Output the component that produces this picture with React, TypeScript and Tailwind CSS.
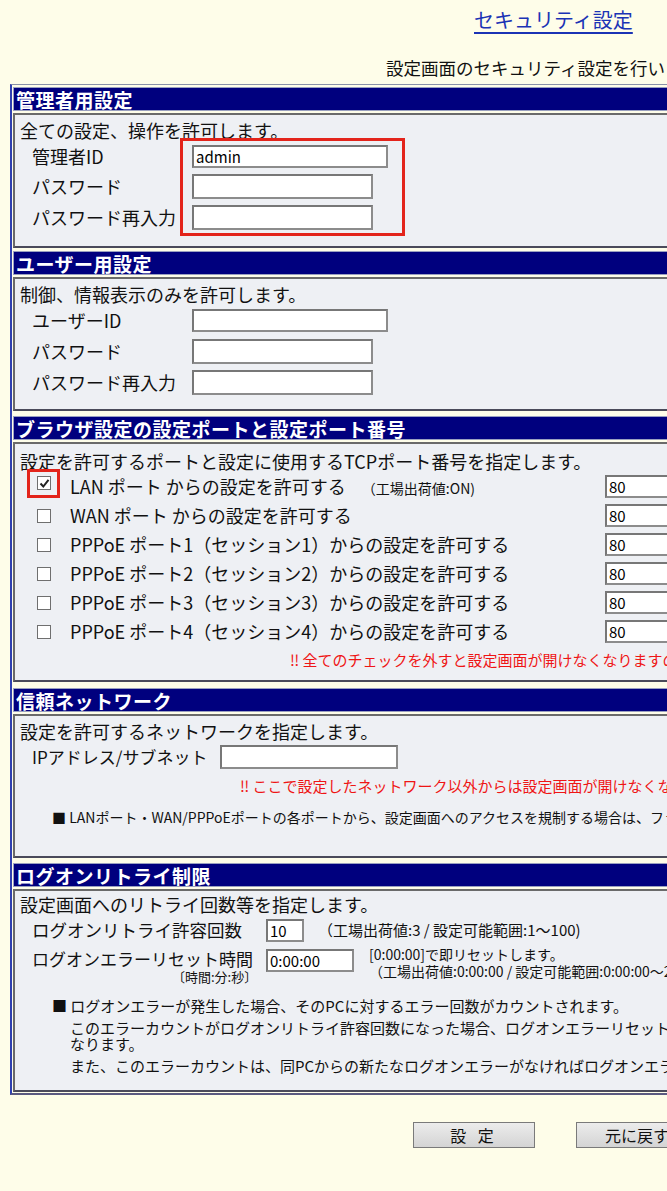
import React from 'react';

const Header = ({ title }: { title: string }) => (
    <div className="h-[24px] bg-[#00007e] border border-[#9aa0c0] flex items-center pl-[2px] text-white font-bold text-[19px] leading-none tracking-[0.5px]">
        {title}
    </div>
);

const Body = ({ className, children }: { className: string; children: React.ReactNode }) => (
    <div className={`mt-[2px] bg-[#eef0f4] border-2 border-[#6a6a6a] border-b-[#4a4a5a] ${className}`}>{children}</div>
);

const TextBox = ({ w, h = 'h-[24px]', value = '' }: { w: string; h?: string; value?: string }) => (
    <input
        readOnly
        value={value}
        className={`${w} ${h} bg-white border-2 border-[#8c8c8c] border-t-[#777] border-l-[#777] px-[2px] text-[15px] text-black outline-none font-['Noto_Sans_CJK_JP',sans-serif]`}
    />
);

const Check = ({ checked = false }: { checked?: boolean }) => (
    <span className="w-[14px] h-[14px] bg-white border border-[#6f6f6f] flex items-center justify-center">
        {checked && (
            <svg width="11" height="11" viewBox="0 0 11 11">
                <path d="M1.5 5.5 L4.3 8.5 L9.5 1.8" fill="none" stroke="#222" strokeWidth="2" />
            </svg>
        )}
    </span>
);

const ports = [
    'WAN ポート からの設定を許可する',
    'PPPoE ポート1（セッション1）からの設定を許可する',
    'PPPoE ポート2（セッション2）からの設定を許可する',
    'PPPoE ポート3（セッション3）からの設定を許可する',
    'PPPoE ポート4（セッション4）からの設定を許可する',
];

export default function App() {
    return (
        <div className="w-[667px] h-[1191px] overflow-hidden bg-[#fefde9] text-[#111] font-['Noto_Sans_CJK_JP',sans-serif]">
            <div className="w-[1100px]">
                {/* Title */}
                <div className="pt-[6px] pl-[474px] text-[20px] leading-[28px] text-[#1b33b5] underline underline-offset-[4px] decoration-[1.5px]">
                    セキュリティ設定
                </div>
                <div className="mt-[23px] pl-[386px] text-[17.5px] leading-[22px] whitespace-nowrap">
                    設定画面のセキュリティ設定を行います。
                </div>

                {/* Outer table */}
                <div className="mt-[5px] ml-[10px] border-l-2 border-l-[#3040b0] border-t border-t-[#8890a8] border-b-2 border-b-[#5a5a80] pt-[2px] pl-[1px] pb-[1px]">
                    {/* 管理者用設定 */}
                    <Header title="管理者用設定" />
                    <Body className="pt-[4px] pb-[13px] text-[18px]">
                        <div className="pl-[5px] leading-[22px]">全ての設定、操作を許可します。</div>
                        <div className="relative pl-[17px]">
                            <div className="absolute left-[165px] top-[-3px] w-[225px] h-[98px] border-[3px] border-[#e3241b]" />
                            <div className="flex items-center h-[30px]">
                                <span className="w-[160px]">管理者ID</span>
                                <TextBox w="w-[196px]" h="h-[23px]" value="admin" />
                            </div>
                            <div className="flex items-center h-[31px]">
                                <span className="w-[160px]">パスワード</span>
                                <TextBox w="w-[181px]" h="h-[25px]" />
                            </div>
                            <div className="flex items-center h-[31px]">
                                <span className="w-[160px] whitespace-nowrap">パスワード再入力</span>
                                <TextBox w="w-[181px]" h="h-[25px]" />
                            </div>
                        </div>
                    </Body>

                    {/* ユーザー用設定 */}
                    <div className="mt-[3px]">
                        <Header title="ユーザー用設定" />
                    </div>
                    <Body className="pt-[4px] pb-[11px] text-[18px]">
                        <div className="pl-[5px] leading-[22px]">制御、情報表示のみを許可します。</div>
                        <div className="pl-[17px]">
                            <div className="flex items-center h-[31px]">
                                <span className="w-[160px]">ユーザーID</span>
                                <TextBox w="w-[196px]" h="h-[23px]" />
                            </div>
                            <div className="flex items-center h-[31px]">
                                <span className="w-[160px]">パスワード</span>
                                <TextBox w="w-[181px]" h="h-[25px]" />
                            </div>
                            <div className="flex items-center h-[31px]">
                                <span className="w-[160px] whitespace-nowrap">パスワード再入力</span>
                                <TextBox w="w-[181px]" h="h-[25px]" />
                            </div>
                        </div>
                    </Body>

                    {/* ブラウザ設定 */}
                    <div className="mt-[5px]">
                        <Header title="ブラウザ設定の設定ポートと設定ポート番号" />
                    </div>
                    <Body className="pt-[6px] pb-[5px] text-[18px]">
                        <div className="pl-[5px] leading-[22px] whitespace-nowrap">
                            設定を許可するポートと設定に使用するTCPポート番号を指定します。
                        </div>
                        <div className="flex items-center h-[29px] whitespace-nowrap">
                            <span className="relative ml-[22px] w-[33px] flex">
                                <span className="absolute left-[-10px] top-[-14px] w-[33px] h-[29px] border-[3px] border-[#e3241b]" />
                                <span className="mt-[-7px]">
                                    <Check checked />
                                </span>
                            </span>
                            <span className="w-[535px]">
                                LAN ポート からの設定を許可する
                                <span className="ml-[16px] text-[14px]">（工場出荷値:ON)</span>
                            </span>
                            <TextBox w="w-[120px]" h="h-[23px]" value="80" />
                        </div>
                        {ports.map(p => (
                            <div key={p} className="flex items-center h-[29px] whitespace-nowrap">
                                <span className="ml-[22px] w-[33px] flex">
                                    <Check />
                                </span>
                                <span className="w-[535px]">{p}</span>
                                <TextBox w="w-[120px]" h="h-[23px]" value="80" />
                            </div>
                        ))}
                        <div className="pl-[275px] h-[29px] flex items-center text-[15px] text-[#ee1515] whitespace-nowrap">
                            ‼ 全てのチェックを外すと設定画面が開けなくなりますのでご注意ください。
                        </div>
                    </Body>

                    {/* 信頼ネットワーク */}
                    <div className="mt-[6px]">
                        <Header title="信頼ネットワーク" />
                    </div>
                    <Body className="pt-[4px] pb-[22px] text-[18px]">
                        <div className="pl-[5px] leading-[22px]">設定を許可するネットワークを指定します。</div>
                        <div className="flex items-center h-[30px] pl-[17px]">
                            <span className="w-[188px] whitespace-nowrap text-[17px]">IPアドレス/サブネット</span>
                            <TextBox w="w-[178px]" h="h-[24px]" />
                        </div>
                        <div className="pl-[225px] h-[29px] flex items-center text-[15px] text-[#ee1515] whitespace-nowrap">
                            ‼ ここで設定したネットワーク以外からは設定画面が開けなくなりますのでご注意ください。
                        </div>
                        <div className="pl-[37px] h-[33px] flex items-center text-[14px] whitespace-nowrap">
                            ■ LANポート・WAN/PPPoEポートの各ポートから、設定画面へのアクセスを規制する場合は、ファイアウォールで設定してください。
                        </div>
                    </Body>

                    {/* ログオンリトライ制限 */}
                    <div className="mt-[5px]">
                        <Header title="ログオンリトライ制限" />
                    </div>
                    <Body className="pt-[2px] pb-[14px] text-[18px]">
                        <div className="pl-[5px] leading-[22px]">設定画面へのリトライ回数等を指定します。</div>
                        <div className="flex items-center h-[30px] pl-[17px] whitespace-nowrap">
                            <span className="w-[234px] text-[17.5px]">ログオンリトライ許容回数</span>
                            <TextBox w="w-[38px]" h="h-[23px]" value="10" />
                            <span className="ml-[14px] text-[15px]">（工場出荷値:3 / 設定可能範囲:1～100)</span>
                        </div>
                        <div className="flex h-[38px] pl-[17px] pt-[4px] whitespace-nowrap">
                            <div className="w-[234px] flex flex-col">
                                <span className="leading-[20px] text-[17px]">ログオンエラーリセット時間</span>
                                <span className="pl-[140px] text-[13px] leading-[16px]">〔時間:分:秒〕</span>
                            </div>
                            <TextBox w="w-[88px]" h="h-[23px]" value="0:00:00" />
                            <div className="ml-[15px] flex flex-col text-[14px] leading-[17px] mt-[-3px]">
                                <span>[0:00:00]で即リセットします。</span>
                                <span>（工場出荷値:0:00:00 / 設定可能範囲:0:00:00～23:59:59)</span>
                            </div>
                        </div>
                        <div className="pl-[37px] mt-[13px] text-[15px] whitespace-nowrap">
                            <div className="leading-[20px]">■ ログオンエラーが発生した場合、そのPCに対するエラー回数がカウントされます。</div>
                            <div className="pl-[18px] mt-[4px] leading-[16px]">
                                このエラーカウントがログオンリトライ許容回数になった場合、ログオンエラーリセット時間の間、設定画面へのログオンができなく
                                <br />
                                なります。
                            </div>
                            <div className="pl-[18px] mt-[4px] leading-[20px]">
                                また、このエラーカウントは、同PCからの新たなログオンエラーがなければログオンエラーリセット時間の経過後にクリアされます。
                            </div>
                        </div>
                    </Body>
                </div>

                {/* Buttons */}
                <div className="mt-[27px] pl-[413px] flex gap-[41px]">
                    <button className="w-[122px] h-[26px] bg-gradient-to-b from-[#ececec] to-[#d4d4d4] border border-[#7a7a7a] text-[16px] tracking-[4px]">
                        設 定
                    </button>
                    <button className="w-[122px] h-[26px] bg-gradient-to-b from-[#ececec] to-[#d4d4d4] border border-[#7a7a7a] text-[16px]">
                        元に戻す
                    </button>
                </div>
            </div>
        </div>
    );
}
